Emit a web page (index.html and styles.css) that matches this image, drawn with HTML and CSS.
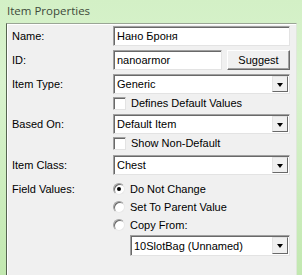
FILE: index.html
```html
<!DOCTYPE html>
<html lang="en">
<head>
  <meta charset="UTF-8" />
  <title>Item Properties</title>
  <link rel="stylesheet" href="styles.css">
</head>
<body>
  <div class="window">
    <div class="title">Item Properties</div>

    <div class="panel">
      <div class="row r-name">
        <span class="lbl">Name:</span>
        <span class="textbox">Нано Броня</span>
      </div>

      <div class="row r-id">
        <span class="lbl">ID:</span>
        <div class="split">
          <span class="textbox">nanoarmor</span>
          <span class="button">Suggest</span>
        </div>
      </div>

      <div class="row r-type">
        <span class="lbl">Item Type:</span>
        <span class="combo">Generic<i class="arrow"></i></span>
      </div>

      <div class="row r-check">
        <span></span>
        <span class="check"><i class="box"></i>Defines Default Values</span>
      </div>

      <div class="row r-based">
        <span class="lbl">Based On:</span>
        <span class="combo">Default Item<i class="arrow"></i></span>
      </div>

      <div class="row r-check">
        <span></span>
        <span class="check"><i class="box"></i>Show Non-Default</span>
      </div>

      <div class="row r-class">
        <span class="lbl">Item Class:</span>
        <span class="combo">Chest<i class="arrow"></i></span>
      </div>

      <div class="row r-radio first">
        <span class="lbl">Field Values:</span>
        <span class="radio"><i class="dot on"></i>Do Not Change</span>
      </div>

      <div class="row r-radio">
        <span></span>
        <span class="radio"><i class="dot"></i>Set To Parent Value</span>
      </div>

      <div class="row r-radio">
        <span></span>
        <span class="radio"><i class="dot"></i>Copy From:</span>
      </div>

      <div class="row r-copy">
        <span></span>
        <span class="combo">10SlotBag (Unnamed)<i class="arrow"></i></span>
      </div>
    </div>
  </div>
</body>
</html>
```

FILE: styles.css
```css
body {
  margin: 0;
  font-family: 'Liberation Sans', Arial, sans-serif;
  font-size: 11px;
  color: #000;
  overflow: hidden;
}
.window {
  width: 302px;
  height: 275px;
  background: linear-gradient(180deg, #d3f0c6 0%, #d9f3ce 30%, #c2e8b0 100%);
  display: flex;
  flex-direction: column;
}
.title {
  height: 23px;
  padding-left: 7px;
  line-height: 22px;
  font-family: 'Open Sans', 'Noto Sans', sans-serif;
  font-size: 11.5px;
  color: #3d4a3a;
}
.panel {
  flex: 1;
  margin: 0 5px 0 6px;
  background: #f0f0f0;
  border-left: 1px solid #55644f;
  border-top: 1px solid #9aa595;
  border-right: 1px solid #dfe8da;
  box-shadow: inset 1px 1px 0 #ffffff;
  padding: 2px 6px 0 5px;
  display: flex;
  flex-direction: column;
}
.row {
  display: grid;
  grid-template-columns: 101px 1fr;
  align-items: center;
}
.lbl {
  white-space: nowrap;
}
.r-name { height: 20px; }
.r-id { height: 20px; margin-top: 4px; }
.r-type { height: 20px; margin-top: 4px; }
.r-check { height: 16px; margin-top: 1px; }
.r-based { height: 20px; margin-top: 3px; }
.r-class { height: 20px; margin-top: 4px; }
.r-radio { height: 16px; margin-top: 2px; }
.r-radio.first { margin-top: 6px; }
.r-copy { height: 21px; margin-top: 2px; grid-template-columns: 118px 1fr; }

.textbox, .combo {
  box-sizing: border-box;
  height: 20px;
  display: flex;
  align-items: center;
  padding-left: 3px;
  background: #fff;
  border-style: solid;
  border-width: 1px;
  border-color: #a0a0a0 #e3e3e3 #e3e3e3 #a0a0a0;
  box-shadow: inset 1px 1px 0 #696969;
  position: relative;
  white-space: nowrap;
}
.r-copy .combo { height: 21px; }
.split {
  display: flex;
  gap: 5px;
}
.split .textbox { flex: 1; }
.button {
  box-sizing: border-box;
  width: 63px;
  height: 20px;
  display: flex;
  align-items: center;
  justify-content: center;
  background: #f0f0f0;
  border-style: solid;
  border-width: 1px;
  border-color: #ffffff #696969 #696969 #ffffff;
  box-shadow: inset -1px -1px 0 #a0a0a0;
}
.arrow {
  position: absolute;
  top: 1px;
  right: 1px;
  bottom: 1px;
  width: 16px;
  box-sizing: border-box;
  background: #f0f0f0;
  border-style: solid;
  border-width: 1px;
  border-color: #e3e3e3 #696969 #696969 #e3e3e3;
}
.arrow::after {
  content: '';
  position: absolute;
  left: 4px;
  top: 6px;
  border-left: 3.5px solid transparent;
  border-right: 3.5px solid transparent;
  border-top: 4px solid #000;
}
.check, .radio {
  display: flex;
  align-items: center;
  white-space: nowrap;
}
.box {
  box-sizing: border-box;
  width: 13px;
  height: 13px;
  margin-right: 5px;
  background: #fff;
  border-style: solid;
  border-width: 1px;
  border-color: #a0a0a0 #e3e3e3 #e3e3e3 #a0a0a0;
  box-shadow: inset 1px 1px 0 #696969;
}
.dot {
  box-sizing: border-box;
  width: 12px;
  height: 12px;
  margin-right: 5px;
  border-radius: 50%;
  background: #fff;
  border: 1px solid;
  border-color: #a0a0a0 #e8e8e8 #e8e8e8 #a0a0a0;
  box-shadow: inset 1px 1px 0 #696969;
  position: relative;
}
.dot.on::after {
  content: '';
  position: absolute;
  left: 3px;
  top: 3px;
  width: 4px;
  height: 4px;
  border-radius: 50%;
  background: #000;
}
```
